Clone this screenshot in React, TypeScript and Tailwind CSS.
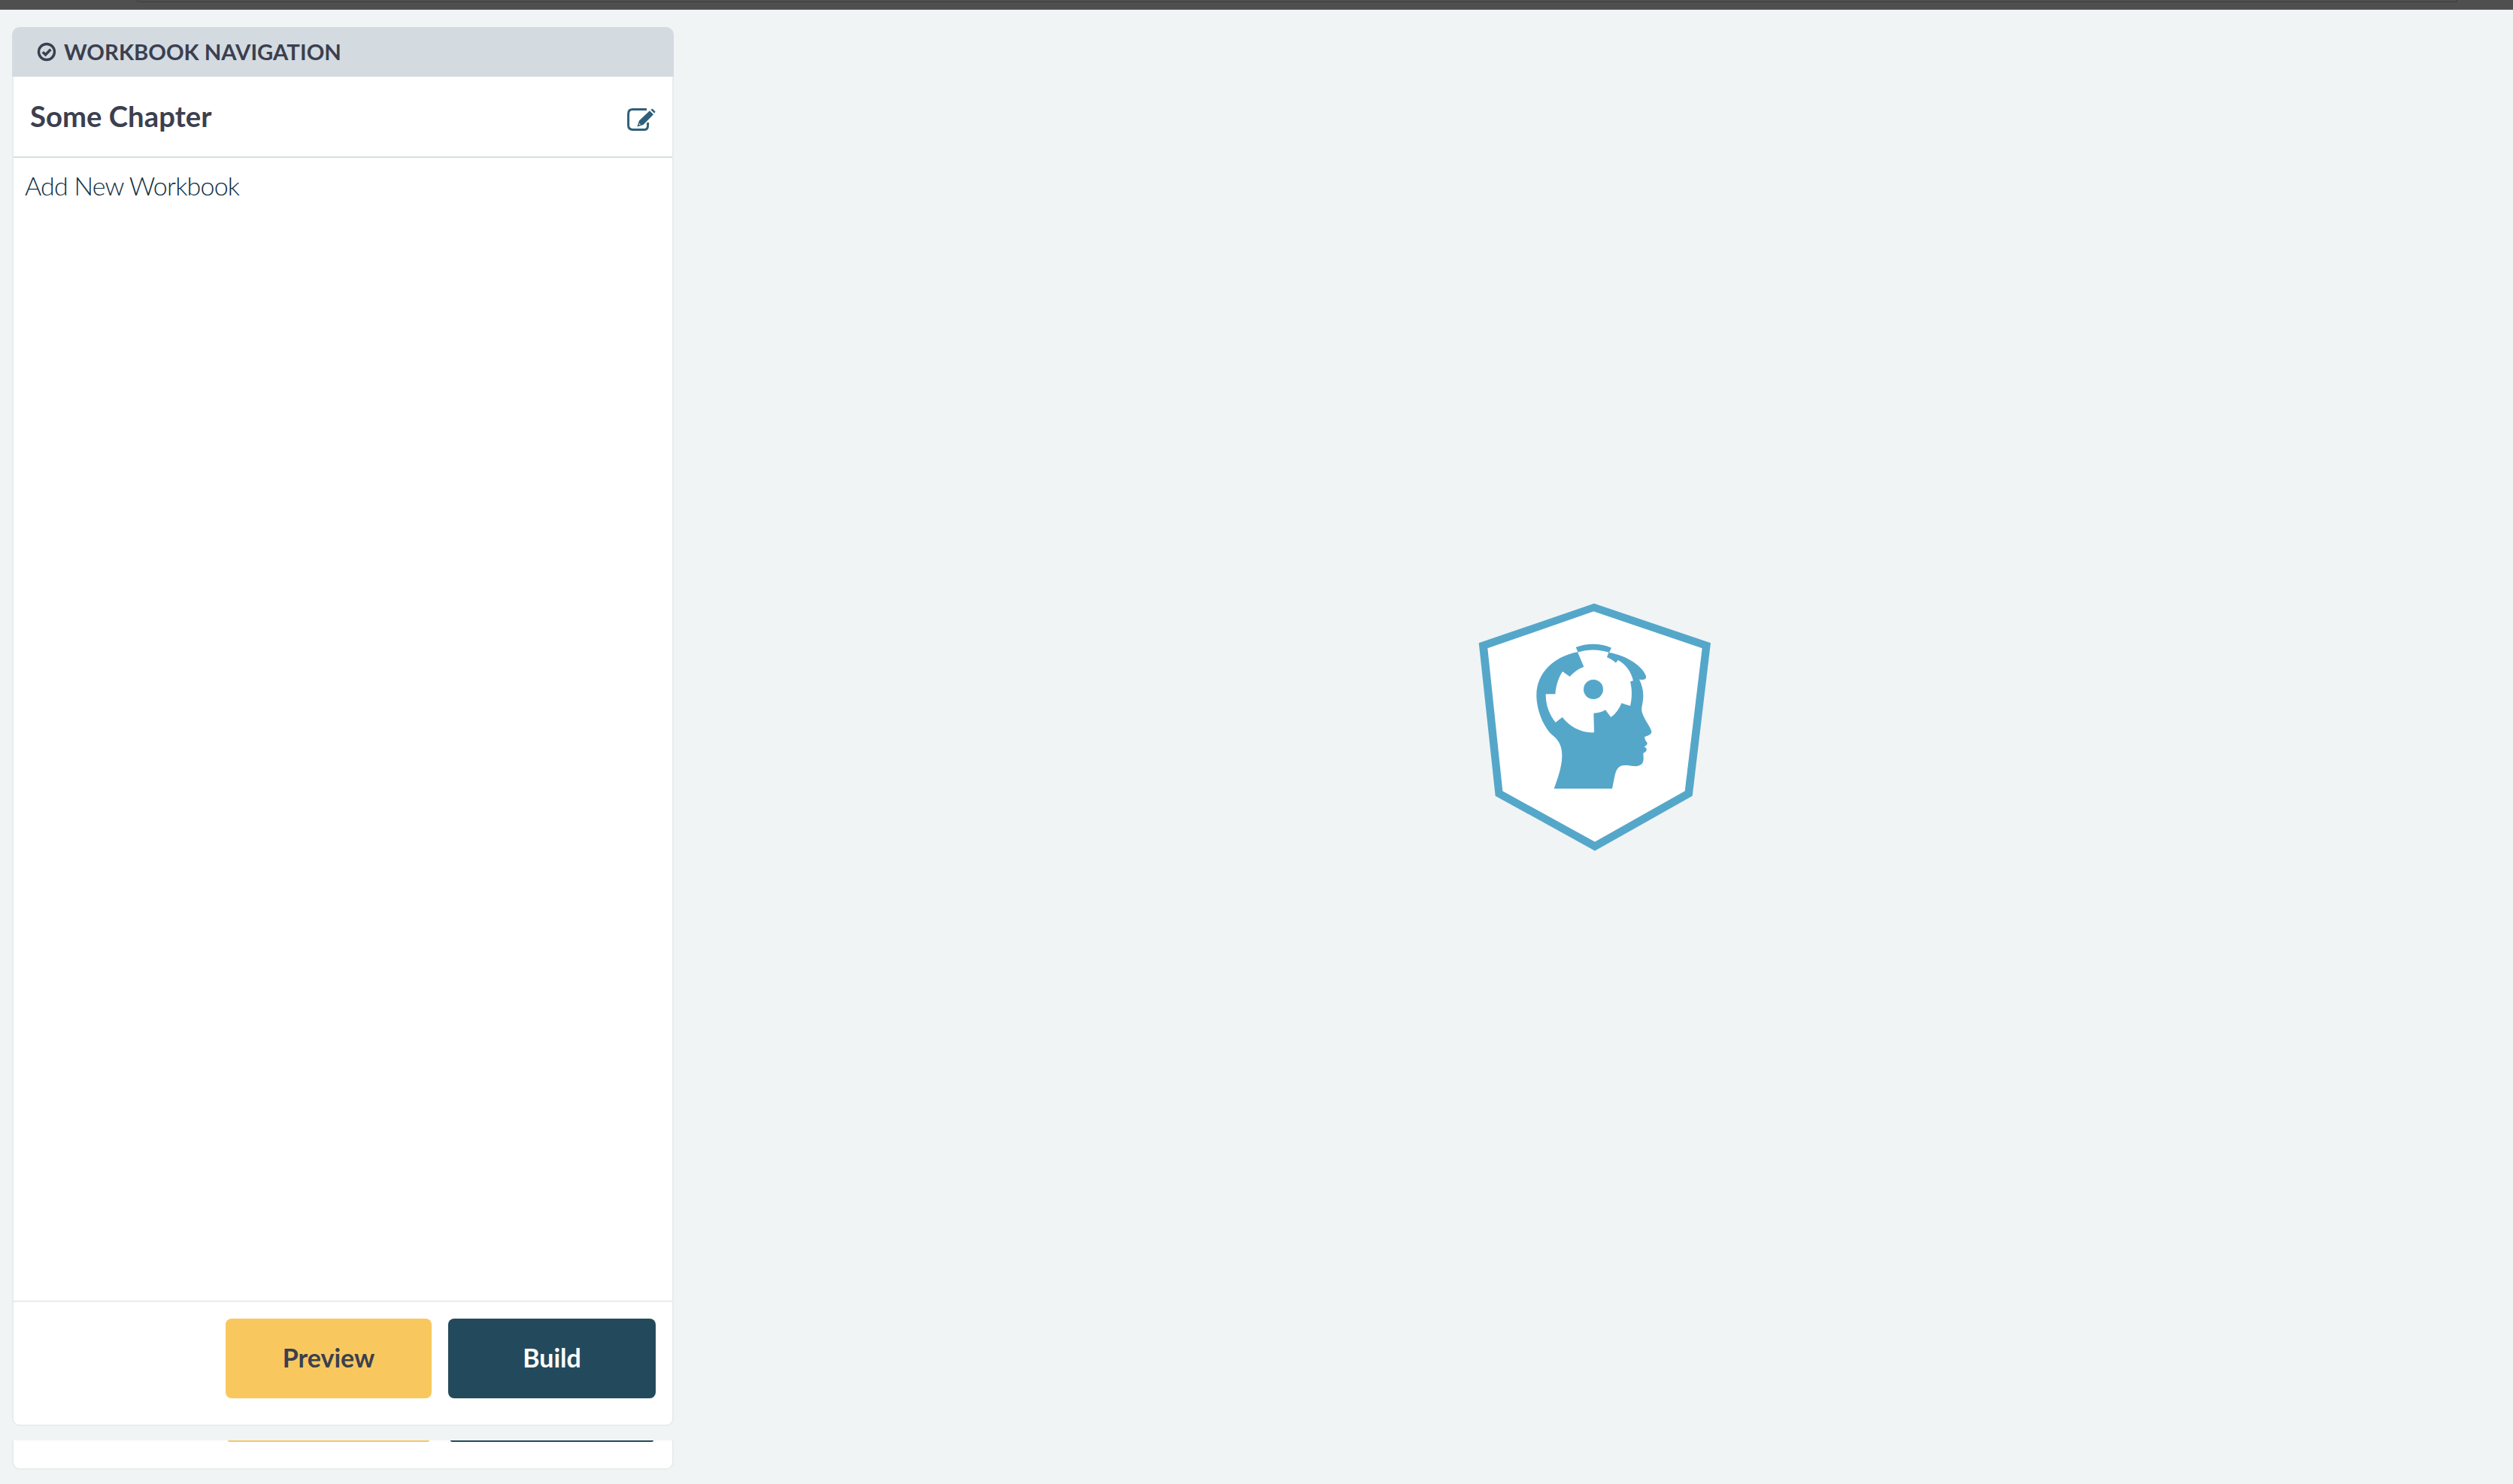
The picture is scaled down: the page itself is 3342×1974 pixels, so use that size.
const SHIELD_BLUE = '#55a7ca'

function Logo() {
  return (
    <svg viewBox="0 0 1080 1140" className="w-[360px] h-[380px]">
      <path d="M540 68 L1005 226 L932 836 L543 1055 L146 836 L80 226 Z" fill={SHIELD_BLUE} />
      <path d="M538 100 L971 247 L902 817 L543 1019 L175 817 L115 247 Z" fill="#ffffff" />
      {/* head */}
      <path
        fill={SHIELD_BLUE}
        d="M474 262 C380 280 310 345 310 435 C310 495 340 565 375 595 C400 615 412 640 412 675 C412 720 395 765 380 807 L612 807 C620 775 622 745 632 730 C645 708 670 714 695 717 C725 720 738 708 737 685 L736 665 C745 662 751 655 749 648 C746 642 740 642 740 640 C748 635 753 630 752 625 C746 617 740 607 742 600 C755 596 770 592 769 578 C762 555 735 525 730 497 C728 480 736 465 736 435 C736 415 730 390 720 371 C735 375 750 373 747 358 C735 320 670 275 600 264 Z"
      />
      {/* gear cut out of the head */}
      <path
        fill="#ffffff"
        d="M474 262 C515 250 560 250 598 264 L591 283 C605 288 617 296 627 305 L635 294 C665 310 688 340 696 376 L684 380 C692 410 692 445 684 477 L649 466 C640 490 625 510 607 522 L585 493 C570 502 555 506 538 506 L540 583 C490 586 442 560 413 522 L386 543 C360 510 347 475 347 430 L385 430 C387 400 397 365 414 340 L443 360 C458 343 478 329 499 321 Z"
      />
      <circle cx="537" cy="411" r="39" fill={SHIELD_BLUE} />
      {/* arc above the gear */}
      <path
        fill={SHIELD_BLUE}
        d="M467 243 C510 226 565 225 609 245 L600 264 C560 250 515 250 476 263 Z"
      />
    </svg>
  )
}

function NavPanel() {
  return (
    <div className="h-[1861px] flex flex-col rounded-t-[8px]">
      <div className="h-[66px] shrink-0 flex items-center gap-[10px] pl-[33px] bg-[#d3dbe1] rounded-t-[10px]">
        <svg viewBox="0 0 26 26" className="w-[26px] h-[26px]">
          <circle cx="13" cy="13" r="10.5" fill="none" stroke="#3c3f4f" strokeWidth="3.4" />
          <path d="M7.8 13.2 L11.6 16.8 L18.4 9.8" fill="none" stroke="#3c3f4f" strokeWidth="3.6" />
        </svg>
        <span className="text-[29.3px] font-bold leading-none text-[#3c3f4f]">WORKBOOK NAVIGATION</span>
      </div>
      <div className="flex-1 flex flex-col bg-white border-x-2 border-b-2 border-[#e7eced] rounded-b-[10px]">
        <div className="h-[108px] shrink-0 flex items-center justify-between px-[22px] border-b-2 border-[#d3dfe1]">
          <span className="text-[38.3px] font-bold text-[#3c3f4f]">Some Chapter</span>
          <svg viewBox="0 0 38 30" className="w-[38px] h-[30px] mt-[7px]" fill="none">
            <path d="M26 1.6 H7.5 Q1.6 1.6 1.6 7.5 V22.5 Q1.6 28.4 7.5 28.4 H23.5 Q27.6 28.4 27.6 22.5 V19" stroke="#2f6079" strokeWidth="3" />
            <path d="M13.4 24.6 L16 16.6 L30 3.2 L35 8.2 L21.5 22 Z M15.8 22.2 L18 21.6 L16.4 20 Z" fill="#2f6079" fillRule="evenodd" />
            <path d="M31.4 2 L33.4 0.4 L37.6 4.6 L36.2 6.8 Z" fill="#2f6079" />
          </svg>
        </div>
        <div className="flex-1 pl-[15px] pt-[15px]">
          <span className="text-[34px] font-light leading-[44px] tracking-[-0.8px] text-[#0f3040]">Add New Workbook</span>
        </div>
        <div className="h-[165px] shrink-0 flex justify-end gap-[22px] pt-[22px] pr-[22px] border-t-2 border-[#e7eced]">
          <button className="w-[274px] h-[106px] pb-[3px] rounded-[8px] bg-[#f8c85f] text-[34px] font-bold text-[#3c3f4f]">Preview</button>
          <button className="w-[276px] h-[106px] pb-[3px] rounded-[8px] bg-[#234a5c] text-[34px] font-bold text-white">Build</button>
        </div>
      </div>
    </div>
  )
}

export default function App() {
  return (
    <div className="w-[3342px] h-[1974px] overflow-hidden flex flex-col bg-[#f0f4f5]" style={{ fontFamily: 'Lato, sans-serif' }}>
      <div className="h-[13px] shrink-0 bg-[#4f4f4f] border-b border-[#5c5c5c] pl-[182px] pr-[74px]">
        <div className="h-[3px] rounded-b-[4px] border-x border-b border-[#3e3e3e]" />
      </div>
      <div className="flex-1 flex">
        <div className="w-[880px] ml-[16px] mt-[23px] shrink-0 flex flex-col gap-[19px]">
          <NavPanel />
          <div className="h-[39px] shrink-0 bg-white border-x-2 border-b-2 border-[#e7eced] rounded-b-[10px] flex justify-end gap-[28px] pr-[25px]">
            <div className="w-[268px] h-[2px] rounded-b-[6px] bg-[#f8c85f]" />
            <div className="w-[270px] h-[2px] rounded-b-[6px] bg-[#234a5c]" />
          </div>
        </div>
        <div className="flex-1 flex items-center justify-center pb-[47px] pl-[2px]">
          <Logo />
        </div>
      </div>
    </div>
  )
}
